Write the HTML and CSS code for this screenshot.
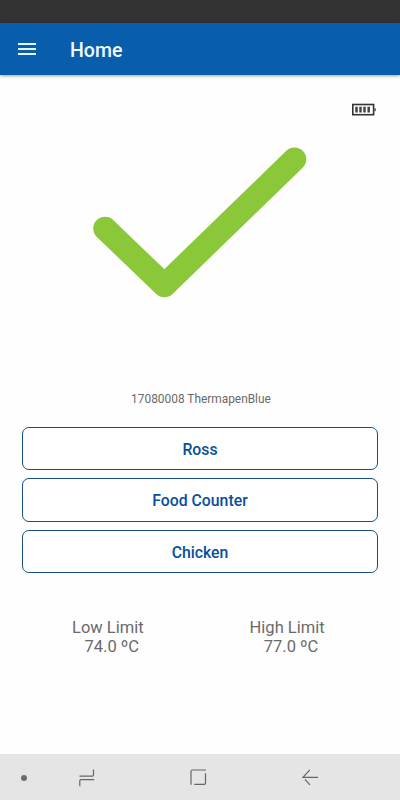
FILE: index.html
```
<!DOCTYPE html>
<html lang="en">
<head>
  <meta charset="UTF-8" />
  <meta name="viewport" content="width=device-width, initial-scale=1.0"/>
  <title>Home</title>
  <link rel="stylesheet" href="styles.css">
</head>
<body>

  <div class="status-bar"></div>

  <header>
    <svg class="menu-icon" width="18" height="14" viewBox="0 0 18 14">
      <path d="M0 2h18M0 7h18M0 12h18" />
    </svg>
    <div class="title">Home</div>
  </header>

  <main>
    <!-- Battery level -->
    <div class="battery">
      <svg width="25" height="13" viewBox="0 0 25 13">
        <rect class="case" x="0.8" y="1.5" width="20.8" height="10.2" />
        <path class="cells" d="M4.5 3.8v5.8M8.5 3.8v5.8M12.5 3.8v5.8M16.7 3.8v5.8" />
        <rect class="tip" x="22.4" y="5.2" width="1.4" height="3" />
      </svg>
    </div>

    <!-- Reading result -->
    <svg class="check" width="214" height="151" viewBox="0 0 214 151">
      <path d="M12 81.5L71.4 138.5L201.5 12.2" />
    </svg>

    <p class="device">17080008 ThermapenBlue</p>

    <div class="buttons">
      <button>Ross</button>
      <button>Food Counter</button>
      <button>Chicken</button>
    </div>

    <div class="limits">
      <div class="limit">
        <div>Low Limit</div>
        <div class="value">74.0 ºC</div>
      </div>
      <div class="limit">
        <div>High Limit</div>
        <div class="value">77.0 ºC</div>
      </div>
    </div>
  </main>

  <!-- System navigation -->
  <nav>
    <span class="dot"></span>
    <svg class="recents" width="16" height="18" viewBox="0 0 16 18">
      <path d="M0.5 7.2H13.3Q14.5 7.2 14.5 6V0.5M15.2 10.6H2Q0.8 10.6 0.8 11.8V17.2" />
    </svg>
    <svg class="home" width="17" height="17" viewBox="0 0 17 17">
      <path d="M1 15.8V2.5Q1 1 2.5 1H16M15.5 4.2V14Q15.5 15.3 14.2 15.3H4.3" />
    </svg>
    <svg class="back" width="17" height="17" viewBox="0 0 17 17">
      <path d="M7.9 0.8L1 8.3H16M2.9 10.4L7.9 15.8" />
    </svg>
  </nav>

</body>
</html>
```

FILE: styles.css
```
:root {
  --blue: #095dad;
  --text-blue: #07509a;
  --green: #8ac739;
  --grey: #6a6a6a;
}

* {
  box-sizing: border-box;
}

body {
  margin: 0;
  height: 800px;
  display: flex;
  flex-direction: column;
  font-family: Roboto, sans-serif;
  background: #fefefe;
  color: var(--grey);
}

svg {
  display: block;
  fill: none;
}

.status-bar {
  height: 23px;
  background: #333333;
}

header {
  height: 52px;
  padding: 0 18px;
  display: flex;
  align-items: center;
  gap: 34px;
  background: var(--blue);
  box-shadow: 0 1px 3px #00000060;
}

.menu-icon {
  stroke: #e4f6ff;
  stroke-width: 1.8;
}

.title {
  font-size: 19.5px;
  font-weight: 500;
  line-height: 24px;
  padding-top: 3px;
  color: #f4fbff;
}

main {
  flex: 1;
  padding: 28px 22px 0;
  display: flex;
  flex-direction: column;
}

.battery {
  align-self: flex-end;
  margin-right: 1px;
}

.battery .case {
  stroke: #333333;
  stroke-width: 1.6;
}

.battery .cells {
  stroke: #444444;
  stroke-width: 2.5;
}

.battery .tip {
  fill: #555555;
}

.check {
  margin: 31px 0 0 71px;
  stroke: var(--green);
  stroke-width: 23.5;
  stroke-linecap: round;
  stroke-linejoin: round;
}

.device {
  margin: 93px 0 0;
  padding-left: 2px;
  font-size: 11.9px;
  line-height: 16px;
  text-align: center;
}

.buttons {
  margin-top: 19.7px;
  display: flex;
  flex-direction: column;
  gap: 8px;
}

button {
  height: 43.5px;
  padding: 2px 0 0;
  font-family: inherit;
  font-size: 15.8px;
  font-weight: 500;
  color: var(--text-blue);
  background: #ffffff;
  border: 1.3px solid #164d7d;
  border-radius: 7px;
}

.limits {
  margin-top: 44.6px;
  padding-left: 50px;
  display: flex;
  gap: 106px;
  font-size: 16.5px;
  line-height: 19px;
  text-align: center;
}

.limit .value {
  padding-left: 8px;
}

nav {
  height: 46px;
  padding: 1px 0 0 21px;
  display: flex;
  align-items: center;
  background: #e5e5e5;
  stroke: #666666;
  stroke-width: 1.2;
}

.dot {
  width: 6px;
  height: 6px;
  border-radius: 50%;
  background: #6c6c6c;
}

.recents {
  margin-left: 52px;
}

.home {
  margin-left: 95px;
}

.back {
  margin-left: 95px;
}
```
